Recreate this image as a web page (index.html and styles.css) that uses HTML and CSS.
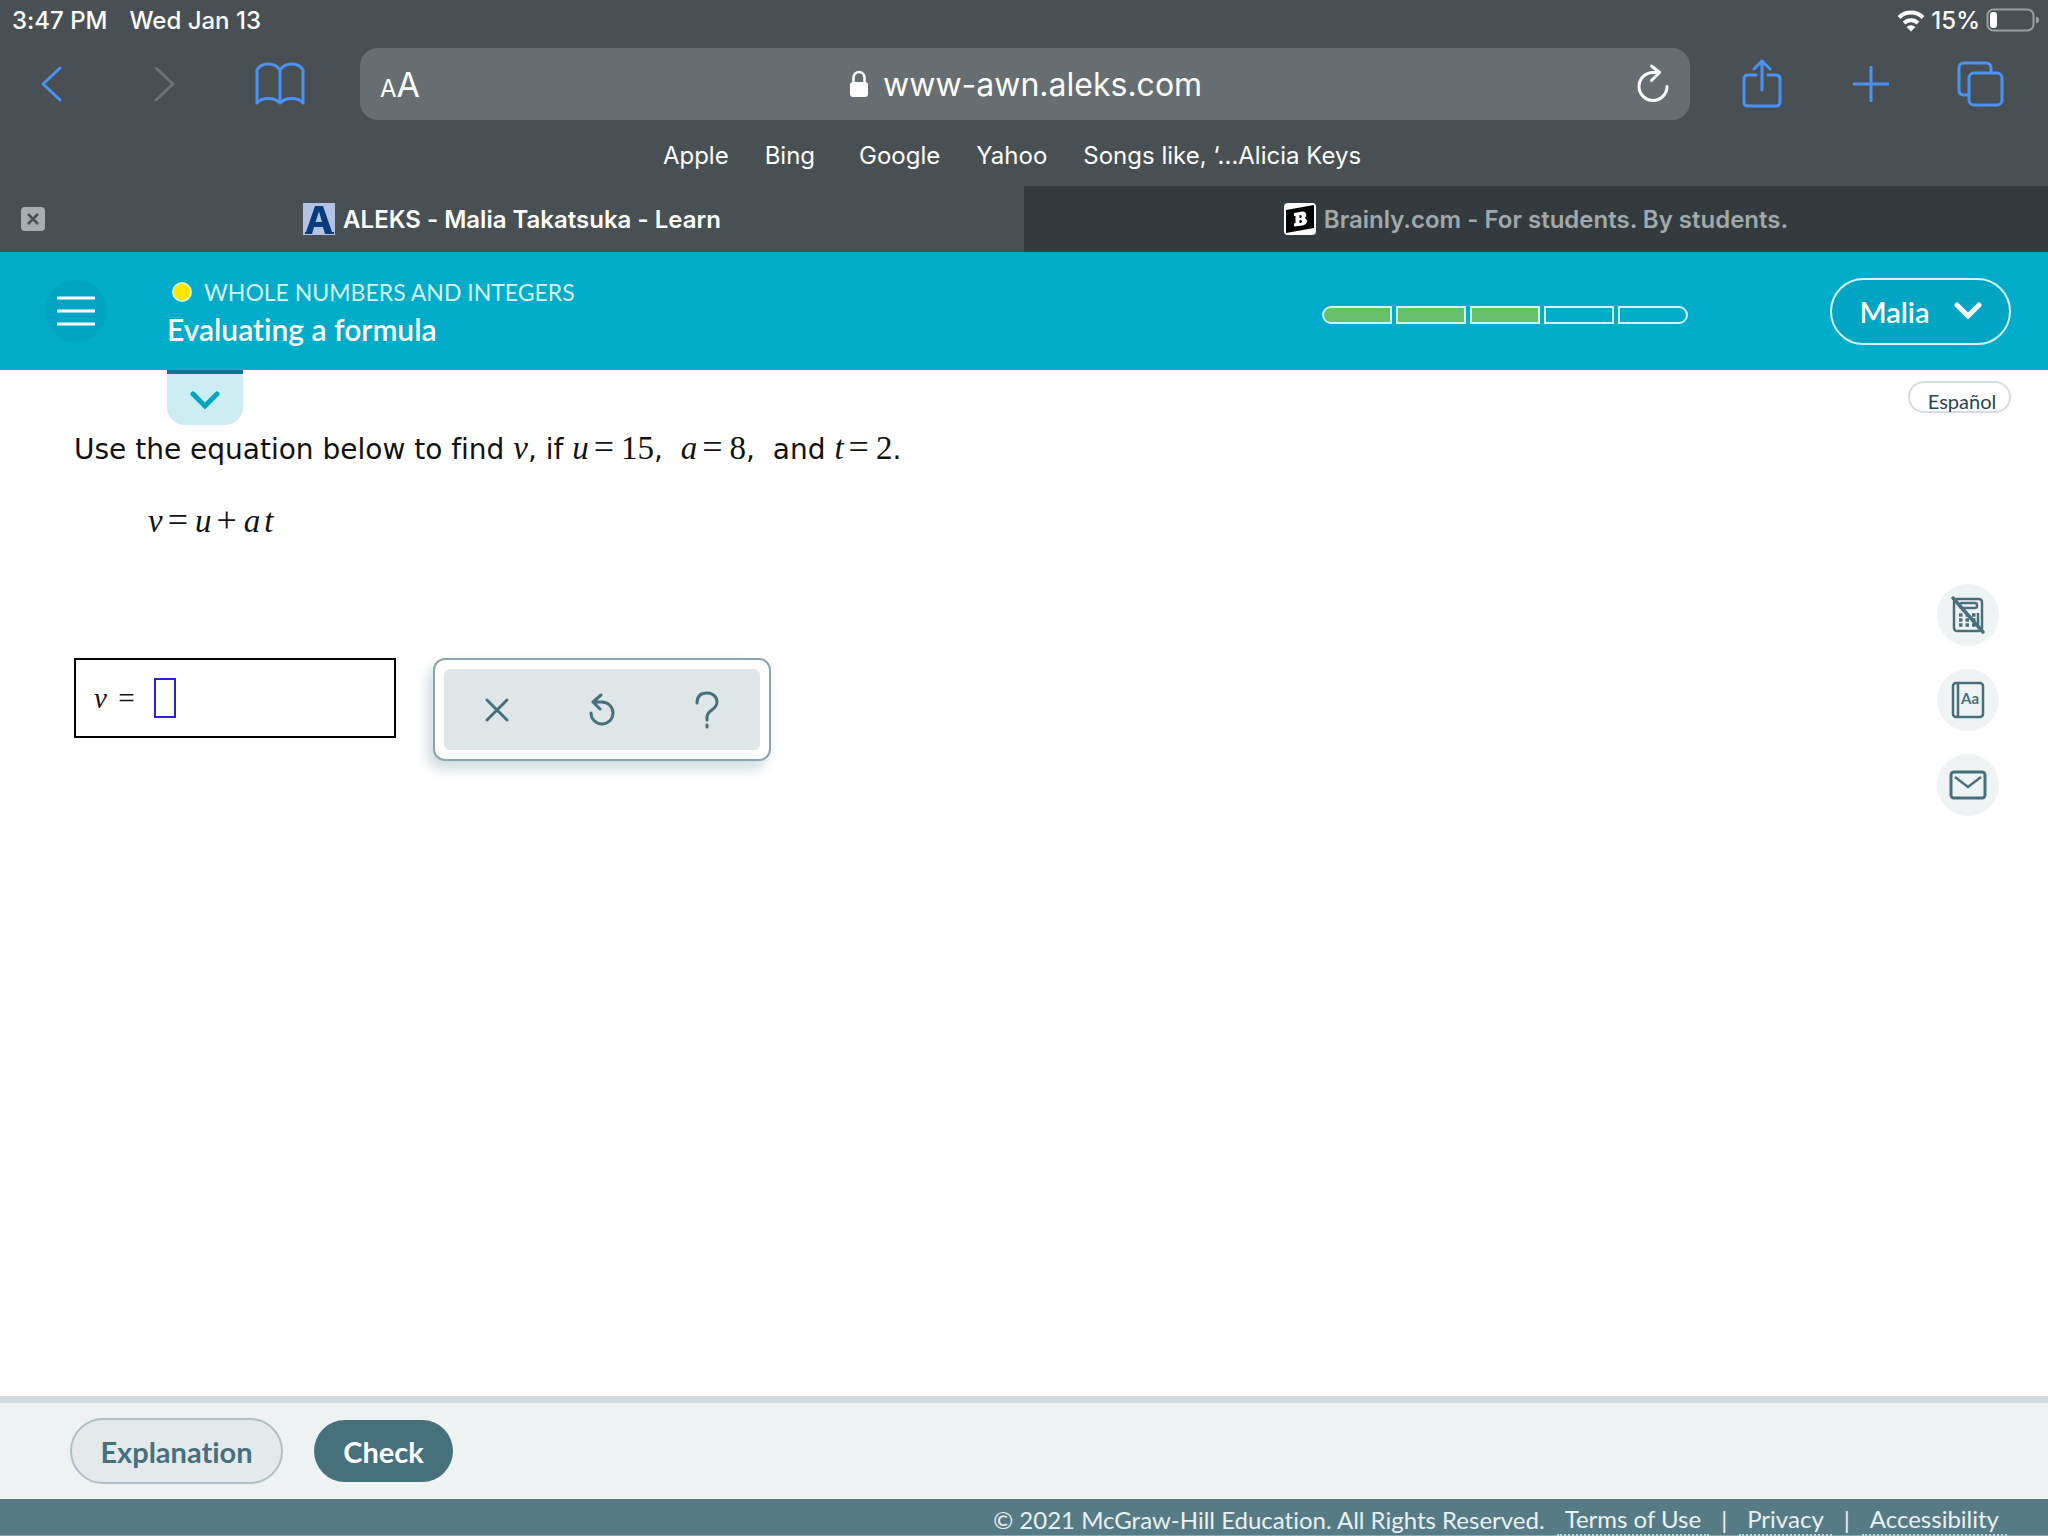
FILE: index.html
```html
<!DOCTYPE html>
<html lang="en">
<head>
<meta charset="utf-8">
<meta name="viewport" content="width=device-width, initial-scale=1">
<title>ALEKS - Malia Takatsuka - Learn</title>
<link rel="stylesheet" href="styles.css">
</head>
<body>
<div class="browser">
  <div class="status">
    <span>3:47 PM</span>
    <span>Wed Jan 13</span>
    <div class="status-right">
      <svg width="28" height="28" viewBox="0 0 28 28" fill="none" stroke="#fff" stroke-width="4"><path d="M2 11.5a17.200 17.200 0 0 1 24 0M7 17a10 10 0 0 1 14 0"/><path d="M14 25.500l-4.500-4.500a6.500 6.500 0 0 1 9 0z" fill="#fff" stroke="none"/></svg>
      <span>15%</span>
      <svg width="54" height="26" viewBox="0 0 54 26"><rect x="1.500" y="2.500" width="46" height="21" rx="6" fill="none" stroke="#9a9fa1" stroke-width="2"/><path d="M50 9.500q3 1 3 3.500t-3 3.500z" fill="#9a9fa1"/><rect x="4" y="5" width="7" height="16" rx="3" fill="#fff"/></svg>
    </div>
  </div>
  <div class="toolbar">
    <div class="nav">
      <button class="tool" aria-label="Back"><svg width="24" height="38" viewBox="0 0 24 38"><path d="M20 3L3 19l17 16"/></svg></button>
      <button class="tool disabled" aria-label="Forward"><svg width="24" height="38" viewBox="0 0 24 38"><path d="M4 3l17 16L4 35"/></svg></button>
      <button class="tool wide" aria-label="Bookmarks"><svg width="50" height="44" viewBox="0 0 50 44"><path d="M25 8C22 3.500 18 2 13.500 2S4 4 2 8v33c2-3 6-4.500 11.500-4.500S22 38 25 41c3-3 6-4.500 11.500-4.500S46 38 48 41V8c-2-4-6-6-11.500-6S28 3.500 25 8v33"/></svg></button>
    </div>
    <div class="address">
      <button class="reader" aria-label="Page settings"><span class="small-a">A</span>A</button>
      <div class="url">
        <svg width="20" height="28" viewBox="0 0 20 28"><rect x="1" y="12" width="18" height="15" rx="3" fill="#fff"/><path d="M4.500 13V7.500a5.500 5.500 0 0 1 11 0V13" fill="none" stroke="#fff" stroke-width="2.500"/></svg>
        <input class="url-input" type="text" value="www-awn.aleks.com" aria-label="Address">
      </div>
      <button class="reload" aria-label="Reload"><svg width="34" height="40" viewBox="0 0 34 40"><path d="M31 22.500A14 14 0 1 1 17 8.500h6M15.500 2l8 6.500-8 8"/></svg></button>
    </div>
    <div class="actions">
      <button class="tool" aria-label="Share"><svg width="40" height="50" viewBox="0 0 40 50"><path d="M14 16H6q-4 0-4 4v23q0 4 4 4h28q4 0 4-4V20q0-4-4-4h-8M20 31V2M12 10l8-8 8 8"/></svg></button>
      <button class="tool" aria-label="New tab"><svg width="36" height="36" viewBox="0 0 36 36"><path d="M18 1v34M1 18h34"/></svg></button>
      <button class="tool" aria-label="Show tabs"><svg width="48" height="46" viewBox="0 0 48 46"><path d="M12 34H8q-5 0-5-5V7q0-5 5-5h22q5 0 5 5v4"/><rect x="13" y="12" width="33" height="32" rx="5"/></svg></button>
    </div>
  </div>
  <nav class="bookmarks">
    <a href="#">Apple</a><a href="#">Bing</a><a href="#" class="spaced">Google</a><a href="#">Yahoo</a><a href="#">Songs like, ‘...Alicia Keys</a>
  </nav>
  <div class="tabs">
    <div class="tab">
      <button class="close" aria-label="Close tab"><svg width="24" height="24" viewBox="0 0 24 24"><rect width="24" height="24" rx="4" fill="#a5afb1"/><path d="M7 7l10 10M17 7L7 17" stroke="#495053" stroke-width="2.500"/></svg></button>
      <svg width="32" height="32" viewBox="0 0 32 32"><rect width="32" height="32" fill="#b3c3e3"/><path fill-rule="evenodd" d="M2 31v-2h1L12 3h8l9 26h2v2h-9l-2-7h-9l-2 7zM12.500 19h6.500L16 8.500z" fill="#073b7c"/></svg>
      <span>ALEKS - Malia Takatsuka - Learn</span>
    </div>
    <div class="tab inactive">
      <svg width="32" height="32" viewBox="0 0 32 32"><rect width="32" height="32" rx="4" fill="#fff"/><path d="M2 7l28-5v23L2 30z" fill="#000"/><path fill-rule="evenodd" d="M10 10l8-1.500c5-.5 5.500 5 2.500 6.500 4 1 3 7-2 7.500L10 23.500v-3l1.500-.5v-7H10zM15.500 12v3c3 0 3-3.500 0-3zm0 5v3c3.500 0 3.500-3.500 0-3z" fill="#fff"/></svg>
      <span>Brainly.com - For students. By students.</span>
    </div>
  </div>
</div>

<header class="header">
  <button class="menu" aria-label="Menu"><svg width="38" height="30" viewBox="0 0 38 30"><path d="M1 2h36M1 15h36M1 28h36" stroke="#fff" stroke-width="3" stroke-linecap="round"/></svg></button>
  <div class="titles">
    <div class="topic"><span class="dot"></span>WHOLE NUMBERS AND INTEGERS</div>
    <h1 class="title">Evaluating a formula</h1>
    <button class="drawer" aria-label="Show details"><svg width="30" height="20" viewBox="0 0 30 20"><path d="M3 4l12 12L27 4" fill="none" stroke="#00a5c0" stroke-width="5" stroke-linecap="round"/></svg></button>
  </div>
  <div class="progress" role="img" aria-label="3 of 5 complete">
    <span class="seg done"></span><span class="seg done"></span><span class="seg done"></span><span class="seg"></span><span class="seg"></span>
  </div>
  <button class="user">Malia<svg width="28" height="20" viewBox="0 0 28 20"><path d="M3 4l11 11L25 4" fill="none" stroke="#fff" stroke-width="5" stroke-linecap="round"/></svg></button>
</header>

<main class="main">
  <section class="problem">
    <p class="question">Use the equation below to find <i>v</i>, if <i>u</i><span class="op">=</span><span class="num">15</span>,&nbsp; <i>a</i><span class="op">=</span><span class="num">8</span>,&nbsp; and <i>t</i><span class="op">=</span><span class="num">2</span>.</p>
    <p class="equation"><i>v</i><span class="op">=</span><i>u</i><span class="op">+</span><i>a</i><i class="factor">t</i></p>
    <div class="work">
      <div class="answer">
        <label for="answer"><i>v</i> =</label>
        <input id="answer" class="blank" type="text">
      </div>
      <div class="palette">
        <div class="keys">
          <button class="key" aria-label="Clear"><svg width="28" height="28" viewBox="0 0 28 28"><path d="M4 4l20 20M24 4L4 24"/></svg></button>
          <button class="key" aria-label="Undo"><svg width="28" height="34" viewBox="0 0 28 34"><path d="M3 20a11 11 0 1 0 11-11H6M13 2L5 9l7 7"/></svg></button>
          <button class="key" aria-label="Help"><svg width="26" height="38" viewBox="0 0 26 38"><path d="M3 12C3 5 7 2 13 2s10 4 10 9c0 8-10 8-10 15v3M13 34v2"/></svg></button>
        </div>
      </div>
    </div>
  </section>
  <aside class="side">
    <button class="language">Español</button>
    <div class="helpers">
      <button class="helper" aria-label="Calculator unavailable"><svg width="36" height="40" viewBox="0 0 36 40"><rect x="4" y="4" width="28" height="32" rx="3"/><rect x="10" y="8" width="17" height="5" rx="2"/><path d="M9 20h19M9 25h19M9 30h19" stroke-width="3.500" stroke-dasharray="3.500 3"/><path d="M28 18v14"/><path d="M3 3l30 34" stroke-width="3.500" stroke-linecap="round"/></svg></button>
      <button class="helper" aria-label="Dictionary"><svg width="36" height="40" viewBox="0 0 36 40"><rect x="3" y="3" width="30" height="34" rx="3"/><path d="M8 3v34"/><text x="11" y="24" class="glyph">Aa</text></svg></button>
      <button class="helper" aria-label="Message"><svg width="40" height="40" viewBox="0 0 40 40"><rect x="3" y="7" width="34" height="26" rx="3" stroke-width="3"/><path d="M7 12l13 10 13-10"/></svg></button>
    </div>
  </aside>
</main>

<div class="controls">
  <button class="pill explanation">Explanation</button>
  <button class="pill check">Check</button>
</div>
<footer class="footer">
  <span class="legal">© 2021 McGraw-Hill Education. All Rights Reserved.</span>
  <a href="#">Terms of Use</a><span class="bar">|</span><a href="#">Privacy</a><span class="bar">|</span><a href="#">Accessibility</a>
</footer>
</body>
</html>
```

FILE: styles.css
```css
* { box-sizing: border-box; }
body {
  margin: 0;
  min-height: 100vh;
  display: flex;
  flex-direction: column;
  background: #fff;
  font-family: Lato, "Open Sans", sans-serif;
  font-variant-ligatures: none;
}
button, input { font: inherit; color: inherit; margin: 0; padding: 0; border: 0; background: none; }
button { display: flex; align-items: center; justify-content: center; font-variant-ligatures: none; }
a { color: inherit; text-decoration: none; }
svg { display: block; flex: none; }

/* browser chrome */
.browser { background: #495053; color: #fff; font-family: Inter, sans-serif; }
.status { display: flex; align-items: center; height: 40px; padding: 0 8px 0 12px; gap: 22px; font-size: 24px; font-weight: 500; }
.status-right { display: flex; align-items: center; gap: 6px; margin-left: auto; }
.toolbar { display: flex; align-items: center; padding: 8px 44px 8px 24px; gap: 48px; }
.nav { display: flex; gap: 56px; }
.actions { display: flex; gap: 61px; }
.tool { width: 48px; height: 56px; }
.nav .tool { width: 56px; }
.nav .wide { width: 64px; }
.tool svg { fill: none; stroke: #4a92f5; stroke-width: 3; stroke-linecap: round; stroke-linejoin: round; }
.disabled svg { stroke: #6b7174; }
.address { flex: 1; display: grid; grid-template-columns: 80px 1fr 80px; align-items: center; height: 72px; border-radius: 18px; background: #676e71; padding: 0 20px; }
.reader { justify-content: flex-start; align-items: baseline; font-size: 34px; }
.small-a { font-size: 24px; }
.url { display: flex; align-items: center; justify-content: center; gap: 14px; font-size: 32px; }
.url-input { width: 318px; height: 48px; }
.reload { justify-content: flex-end; }
.reload svg { fill: none; stroke: #fff; stroke-width: 3; stroke-linecap: round; stroke-linejoin: round; }
.bookmarks { display: flex; justify-content: center; align-items: center; height: 58px; padding-bottom: 4px; padding-right: 24px; gap: 36px; font-size: 24px; }
.spaced { margin-left: 8px; }
.tabs { display: flex; height: 66px; font-size: 24px; font-weight: 600; }
.tab { flex: 1; position: relative; display: flex; align-items: center; justify-content: center; gap: 8px; }
.inactive { background: #343b3e; color: #a0a9ac; }
.close { position: absolute; left: 21px; }

/* lesson header */
.header { display: flex; align-items: center; height: 118px; padding: 0 37px 0 45px; background: #00acca; color: #fff; }
.menu { width: 62px; height: 62px; border-radius: 50%; background: #00a5c4; }
.titles { position: relative; align-self: stretch; display: flex; flex-direction: column; justify-content: center; gap: 1px; padding-top: 2px; margin-left: 60px; }
.topic { display: flex; align-items: center; gap: 12px; padding-left: 5px; font-size: 23px; line-height: 32px; color: #d5f6fb; }
.dot { width: 20px; height: 20px; border-radius: 50%; border: 2px solid #d5f6c0; background: #ffe600; }
.title { margin: 0; font-size: 30px; line-height: 40px; font-weight: 600; }
.drawer { position: absolute; top: 118px; left: 0; width: 76px; height: 55px; border-top: 4px solid #00798f; border-radius: 0 0 18px 18px; background: #cceef3; }
.progress { display: flex; gap: 4px; margin-left: auto; margin-top: 7px; }
.seg { width: 70px; height: 18px; border: 2px solid #c9f5fb; }
.seg:first-child { border-radius: 9px 0 0 9px; }
.seg:last-child { border-radius: 0 9px 9px 0; }
.done { background: #66bf6b; }
.user { width: 181px; height: 67px; gap: 24px; margin-left: 142px; border: 2px solid #d5f6fb; border-radius: 34px; background: #00a5c4; font-size: 29px; font-weight: 600; }

/* problem */
.main { flex: 1; display: flex; justify-content: space-between; padding: 11px 37px 0 74px; }
.problem { padding-top: 47px; color: #111; }
.question, .equation { margin: 0; font-family: "DejaVu Sans", sans-serif; font-size: 28px; line-height: 44px; }
.question i, .equation i, .num { font-family: "Liberation Serif", serif; font-size: 33px; line-height: 32px; }
.op { font-family: "Liberation Serif", serif; font-size: 36px; line-height: 32px; padding: 0 7px 0 5px; }
.equation { margin-top: 29px; padding-left: 74px; }
.factor { padding-left: 4px; }
.work { display: flex; gap: 37px; margin-top: 113px; }
.answer { display: flex; align-items: center; gap: 20px; width: 322px; height: 80px; padding-left: 18px; border: 2px solid #000; font-family: "Liberation Serif", serif; font-size: 29px; }
.answer i { padding-right: 4px; }
.blank { width: 22px; height: 40px; border: 2px solid #2a20d8; }
.palette { width: 338px; height: 103px; padding: 9px; border: 2px solid #8ba5ac; border-radius: 12px; background: #fff; box-shadow: -5px 8px 14px #cfdcdf; }
.keys { display: flex; height: 100%; border-radius: 6px; background: #dfe6e8; }
.key { flex: 1; }
.key svg { fill: none; stroke: #47707d; stroke-width: 3; stroke-linecap: round; stroke-linejoin: round; }
.side { display: flex; flex-direction: column; align-items: flex-end; }
.language { width: 103px; height: 32px; padding: 8px 0 0 5px; border: 2px solid #d5dde1; border-radius: 16px; color: #244652; font-size: 20px; }
.helpers { display: flex; flex-direction: column; gap: 23px; margin: 171px 12px 0 0; }
.helper { width: 62px; height: 62px; border-radius: 50%; background: #eff3f4; }
.helper svg { fill: none; stroke: #47707d; stroke-width: 2.500; }
.glyph { fill: #47707d; stroke: none; font-size: 15px; font-weight: 700; }

/* bottom */
.controls { display: flex; align-items: center; gap: 31px; height: 103px; padding: 0 70px; border-top: 7px solid #d1dadd; background: #eef2f3; }
.pill { border-radius: 34px; font-size: 29px; font-weight: 700; }
.explanation { width: 213px; height: 66px; border: 2px solid #b0c0c4; background: #e4eaec; color: #47707d; }
.check { width: 139px; height: 62px; background: #47707d; color: #fff; }
.footer { display: flex; align-items: center; justify-content: flex-end; height: 37px; padding: 4px 41px 0 0; background: #577b85; border-bottom: 1px solid #8ba5ac; color: #e8f1f3; font-size: 24px; }
.footer a { padding: 0 8px; line-height: 31px; border-bottom: 2px dotted #c7d6da; }
.legal { margin-right: 12px; }
.bar { padding: 0 12px; }
```
